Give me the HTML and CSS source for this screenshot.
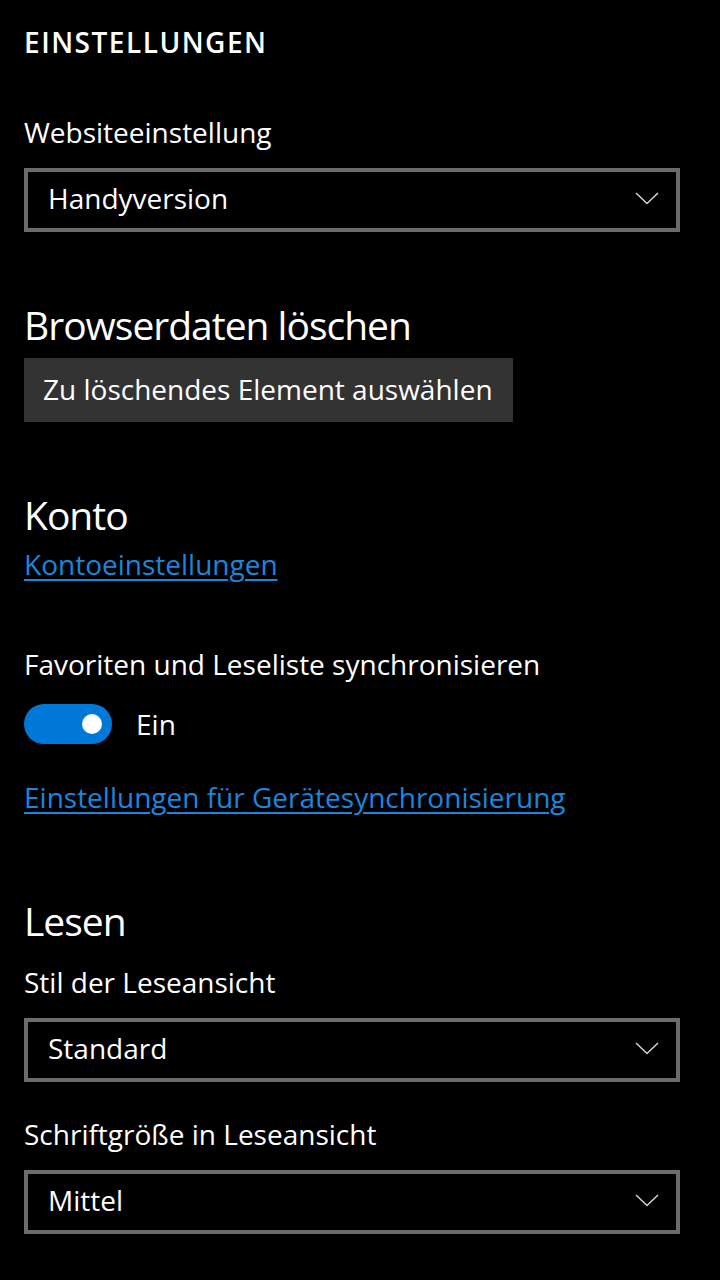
FILE: index.html
```html
<!DOCTYPE html>
<html lang="de">
<head>
    <meta charset="UTF-8">
    <meta name="viewport" content="width=device-width, initial-scale=1.0">
    <title>Einstellungen</title>
    <link rel="stylesheet" href="styles.css">
</head>
<body>
    <div class="settings">
        <h1 class="page-title">EINSTELLUNGEN</h1>

        <!-- Ansicht der Website -->
        <div class="field field-first">
            <div class="field-label">Websiteeinstellung</div>
            <div class="select">
                <span class="select-value">Handyversion</span>
                <svg class="chevron" width="24" height="13" viewBox="0 0 24 13">
                    <path d="M1 1 L12 11.5 L23 1" fill="none" stroke="#d0d0d0" stroke-width="1.6"/>
                </svg>
            </div>
        </div>

        <!-- Browserdaten -->
        <section class="group">
            <h2 class="group-title">Browserdaten löschen</h2>
            <button class="btn">Zu löschendes Element auswählen</button>
        </section>

        <!-- Konto und Synchronisierung -->
        <section class="group">
            <h2 class="group-title">Konto</h2>
            <a class="link link-account" href="#">Kontoeinstellungen</a>

            <div class="field field-sync">
                <div class="field-label">Favoriten und Leseliste synchronisieren</div>
                <div class="toggle-row">
                    <span class="toggle"><span class="toggle-knob"></span></span>
                    <span class="toggle-text">Ein</span>
                </div>
            </div>

            <a class="link link-devices" href="#">Einstellungen für Gerätesynchronisierung</a>
        </section>

        <!-- Leseansicht -->
        <section class="group group-reading">
            <h2 class="group-title">Lesen</h2>

            <div class="field field-tight">
                <div class="field-label">Stil der Leseansicht</div>
                <div class="select">
                    <span class="select-value">Standard</span>
                    <svg class="chevron" width="24" height="13" viewBox="0 0 24 13">
                        <path d="M1 1 L12 11.5 L23 1" fill="none" stroke="#d0d0d0" stroke-width="1.6"/>
                    </svg>
                </div>
            </div>

            <div class="field field-next">
                <div class="field-label">Schriftgröße in Leseansicht</div>
                <div class="select">
                    <span class="select-value">Mittel</span>
                    <svg class="chevron" width="24" height="13" viewBox="0 0 24 13">
                        <path d="M1 1 L12 11.5 L23 1" fill="none" stroke="#d0d0d0" stroke-width="1.6"/>
                    </svg>
                </div>
            </div>
        </section>
    </div>
</body>
</html>
```

FILE: styles.css
```css
/* Grundlayout */
body {
    margin: 0;
    background-color: #000;
    color: #fff;
    font-family: "Open Sans", "Noto Sans", sans-serif;
    font-size: 28px;
    line-height: 40px;
}

.settings {
    padding: 22px 40px 0 24px;
}

.page-title {
    margin: 0;
    font-size: 28px;
    line-height: 40px;
    font-weight: 600;
    letter-spacing: 1.5px;
}

/* Felder */
.field-first {
    margin-top: 50px;
}

.field-sync {
    margin-top: 60px;
}

.field-tight {
    margin-top: 15px;
}

.field-next {
    margin-top: 32px;
}

.field-label {
    margin-bottom: 16px;
}

.select {
    display: flex;
    align-items: center;
    justify-content: space-between;
    box-sizing: border-box;
    height: 64px;
    border: 4px solid #6b6b6b;
    padding: 0 17px 4px 20px;
}

.chevron {
    display: block;
}

/* Gruppen */
.group {
    margin-top: 67px;
}

.group-reading {
    margin-top: 78px;
}

.group-title {
    margin: 0;
    font-size: 39px;
    line-height: 52px;
    font-weight: 400;
    letter-spacing: -1px;
}

.btn {
    display: inline-block;
    margin-top: 7px;
    padding: 11px 20px 13px 19px;
    border: none;
    border-radius: 0;
    background-color: #333;
    color: #fff;
    font-family: inherit;
    font-size: 28px;
    line-height: 40px;
}

/* Links */
.link {
    display: inline-block;
    color: #1a86df;
    text-decoration: underline;
    text-decoration-thickness: 2px;
    text-underline-offset: 4px;
}

.link-account {
    margin-top: 3px;
}

.link-devices {
    margin-top: 33px;
}

/* Umschalter */
.toggle-row {
    display: flex;
    align-items: center;
    gap: 24px;
    margin-top: 20px;
}

.toggle {
    display: flex;
    align-items: center;
    justify-content: flex-end;
    box-sizing: border-box;
    width: 88px;
    height: 40px;
    padding-right: 10px;
    border-radius: 20px;
    background-color: #0078d7;
}

.toggle-knob {
    width: 20px;
    height: 20px;
    border-radius: 50%;
    background-color: #fff;
}
```
